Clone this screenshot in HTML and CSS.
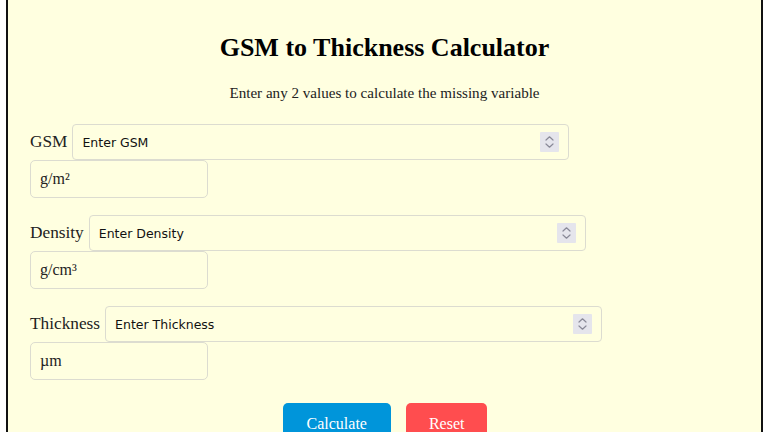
FILE: index.html
```html
<!DOCTYPE html>
<html lang="en">
<head>
<meta charset="utf-8">
<title>GSM to Thickness Calculator</title>
<link rel="stylesheet" href="styles.css">
</head>
<body>
<div class="calc">
  <h2 class="title">GSM to Thickness Calculator</h2>
  <p class="subtitle">Enter any 2 values to calculate the missing variable</p>

  <div class="field">
    <div class="row">
      <label class="label" for="gsm">GSM</label>
      <span class="num-wrap">
        <input class="num" id="gsm" type="number" placeholder="Enter GSM">
        <svg class="spin" viewBox="0 0 19 20" aria-hidden="true"><path d="M6 8 L9.5 4.8 L13 8 M6 12 L9.5 15.2 L13 12"/></svg>
      </span>
    </div>
    <div class="unit">g/m²</div>
  </div>

  <div class="field">
    <div class="row">
      <label class="label" for="density">Density</label>
      <span class="num-wrap">
        <input class="num" id="density" type="number" placeholder="Enter Density">
        <svg class="spin" viewBox="0 0 19 20" aria-hidden="true"><path d="M6 8 L9.5 4.8 L13 8 M6 12 L9.5 15.2 L13 12"/></svg>
      </span>
    </div>
    <div class="unit">g/cm³</div>
  </div>

  <div class="field">
    <div class="row">
      <label class="label" for="thickness">Thickness</label>
      <span class="num-wrap">
        <input class="num" id="thickness" type="number" placeholder="Enter Thickness">
        <svg class="spin" viewBox="0 0 19 20" aria-hidden="true"><path d="M6 8 L9.5 4.8 L13 8 M6 12 L9.5 15.2 L13 12"/></svg>
      </span>
    </div>
    <div class="unit">µm</div>
  </div>

  <div class="actions">
    <button class="btn btn-calc" type="button">Calculate</button>
    <button class="btn btn-reset" type="button">Reset</button>
  </div>
</div>
</body>
</html>
```

FILE: styles.css
```css
html, body {
  margin: 0;
  padding: 0;
  background: #ffffff;
}

body {
  font-family: "Liberation Serif", "Times New Roman", serif;
  color: #111;
}

.calc {
  margin-left: 6px;
  width: 757px;
  height: 432px;
  overflow: hidden;
  box-sizing: border-box;
  background: #ffffe0;
  border-left: 2px solid #111;
  border-right: 2px solid #111;
  padding: 33px 22px 0 22px;
}

.title {
  margin: 0;
  font-size: 26px;
  line-height: 30px;
  font-weight: bold;
  text-align: center;
  color: #000;
}

.subtitle {
  margin: 20px 0 0 0;
  font-size: 15.1px;
  line-height: 20px;
  text-align: center;
  color: #222;
}

.field {
  margin-top: 21px;
}

.field + .field {
  margin-top: 17px;
}

.row {
  display: flex;
  align-items: center;
  gap: 5px;
}

.label {
  font-size: 17.3px;
  color: #222;
}

.num-wrap {
  position: relative;
  display: block;
}

.num {
  display: block;
  width: 497px;
  height: 36px;
  box-sizing: border-box;
  margin: 0;
  padding: 0 32px 0 9px;
  border: 1px solid #dcdcd0;
  border-radius: 4px;
  background: transparent;
  font-family: "DejaVu Sans", Verdana, sans-serif;
  font-size: 12.5px;
  color: #111;
  -moz-appearance: textfield;
}

.num::placeholder {
  color: #111;
  opacity: 1;
}

.num::-webkit-inner-spin-button,
.num::-webkit-outer-spin-button {
  -webkit-appearance: none;
  margin: 0;
}

.spin {
  position: absolute;
  right: 10px;
  top: 8px;
  width: 19px;
  height: 20px;
  background: #e5e5ec;
  border-radius: 1px;
  fill: none;
  stroke: #8a8a98;
  stroke-width: 1.2;
  stroke-linecap: round;
  stroke-linejoin: round;
  pointer-events: none;
}

.unit {
  width: 178px;
  height: 38px;
  box-sizing: border-box;
  padding: 0 9px;
  display: flex;
  align-items: center;
  border: 1px solid #dcdcd0;
  border-radius: 5px;
  font-size: 16px;
  color: #222;
}

.actions {
  margin-top: 23px;
  margin-left: 1px;
  display: flex;
  justify-content: center;
  gap: 15px;
}

.btn {
  border: 0;
  border-radius: 5px;
  padding: 12px 23px;
  font-family: "Liberation Serif", "Times New Roman", serif;
  font-size: 16px;
  line-height: 18px;
  color: #fff;
}

.btn-calc {
  background: #0095da;
  padding-left: 24px;
  padding-right: 24px;
}

.btn-reset {
  background: #ff4d4f;
}
```
